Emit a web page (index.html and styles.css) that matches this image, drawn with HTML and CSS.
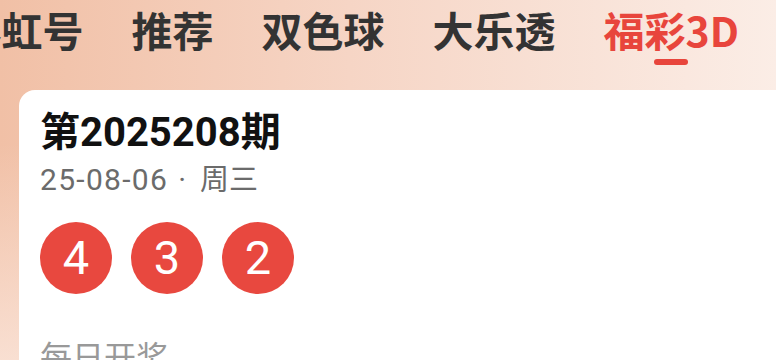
FILE: index.html
```html
<!DOCTYPE html>
<html lang="zh-CN">
<head>
  <meta charset="UTF-8" />
  <meta name="viewport" content="width=device-width, initial-scale=1.0"/>
  <title>福彩3D</title>
  <link rel="stylesheet" href="styles.css">
</head>
<body>

  <div class="page">
    <nav class="tabs">
      <div class="tab">彩虹号</div>
      <div class="tab">推荐</div>
      <div class="tab">双色球</div>
      <div class="tab">大乐透</div>
      <div class="tab active">福彩3D</div>
    </nav>

    <div class="card">
      <h2 class="issue">第2025208期</h2>
      <div class="date">
        <span class="day">25-08-06</span><span class="dot">·</span><span class="week">周三</span>
      </div>
      <div class="balls">
        <span class="ball">4</span>
        <span class="ball">3</span>
        <span class="ball">2</span>
      </div>
      <div class="note">每日开奖</div>
    </div>
  </div>

</body>
</html>
```

FILE: styles.css
```css
body {
  margin: 0;
  padding: 0;
  font-family: Roboto, "Noto Sans CJK SC", sans-serif;
  overflow: hidden;
}
.page {
  width: 776px;
  height: 360px;
  overflow: hidden;
  background:
    linear-gradient(180deg, rgba(255,255,255,0) 0%, rgba(255,255,255,0) 40%, rgba(252,236,228,0.7) 100%),
    linear-gradient(90deg, #f1c0a6 0%, #f6d5c5 45%, #fbede6 100%);
}
.tabs {
  display: flex;
  gap: 48px;
  margin-left: -39.5px;
  height: 90px;
}
.tab {
  position: relative;
  flex-shrink: 0;
  font-family: "Noto Sans CJK SC", sans-serif;
  font-size: 41px;
  line-height: 58px;
  font-weight: 700;
  color: #333;
  white-space: nowrap;
}
.tab.active {
  color: #e8453c;
}
.tab.active::after {
  content: "";
  position: absolute;
  left: 50%;
  top: 59px;
  width: 34px;
  height: 6px;
  margin-left: -17px;
  border-radius: 3px;
  background: #e8453c;
}
.card {
  margin-left: 19px;
  margin-right: -30px;
  background: #fff;
  border-radius: 16px 16px 0 0;
  padding: 23px 21px 0;
  height: 300px;
}
.issue {
  margin: 0;
  font-size: 40px;
  line-height: 40px;
  font-weight: 700;
  color: #111;
}
.date {
  display: flex;
  align-items: baseline;
  margin-top: 12px;
  font-size: 30px;
  line-height: 30px;
  color: #6b6b6b;
}
.day {
  letter-spacing: 1.3px;
}
.dot {
  margin: 0 14px 0 10px;
}
.week {
  font-size: 29px;
}
.balls {
  display: flex;
  gap: 19px;
  margin-top: 27px;
}
.ball {
  width: 72px;
  height: 72px;
  border-radius: 50%;
  background: #e8483f;
  color: #fff;
  font-size: 47px;
  line-height: 72px;
  text-align: center;
}
.note {
  margin-top: 48px;
  font-size: 32px;
  line-height: 32px;
  color: #999;
}
```
